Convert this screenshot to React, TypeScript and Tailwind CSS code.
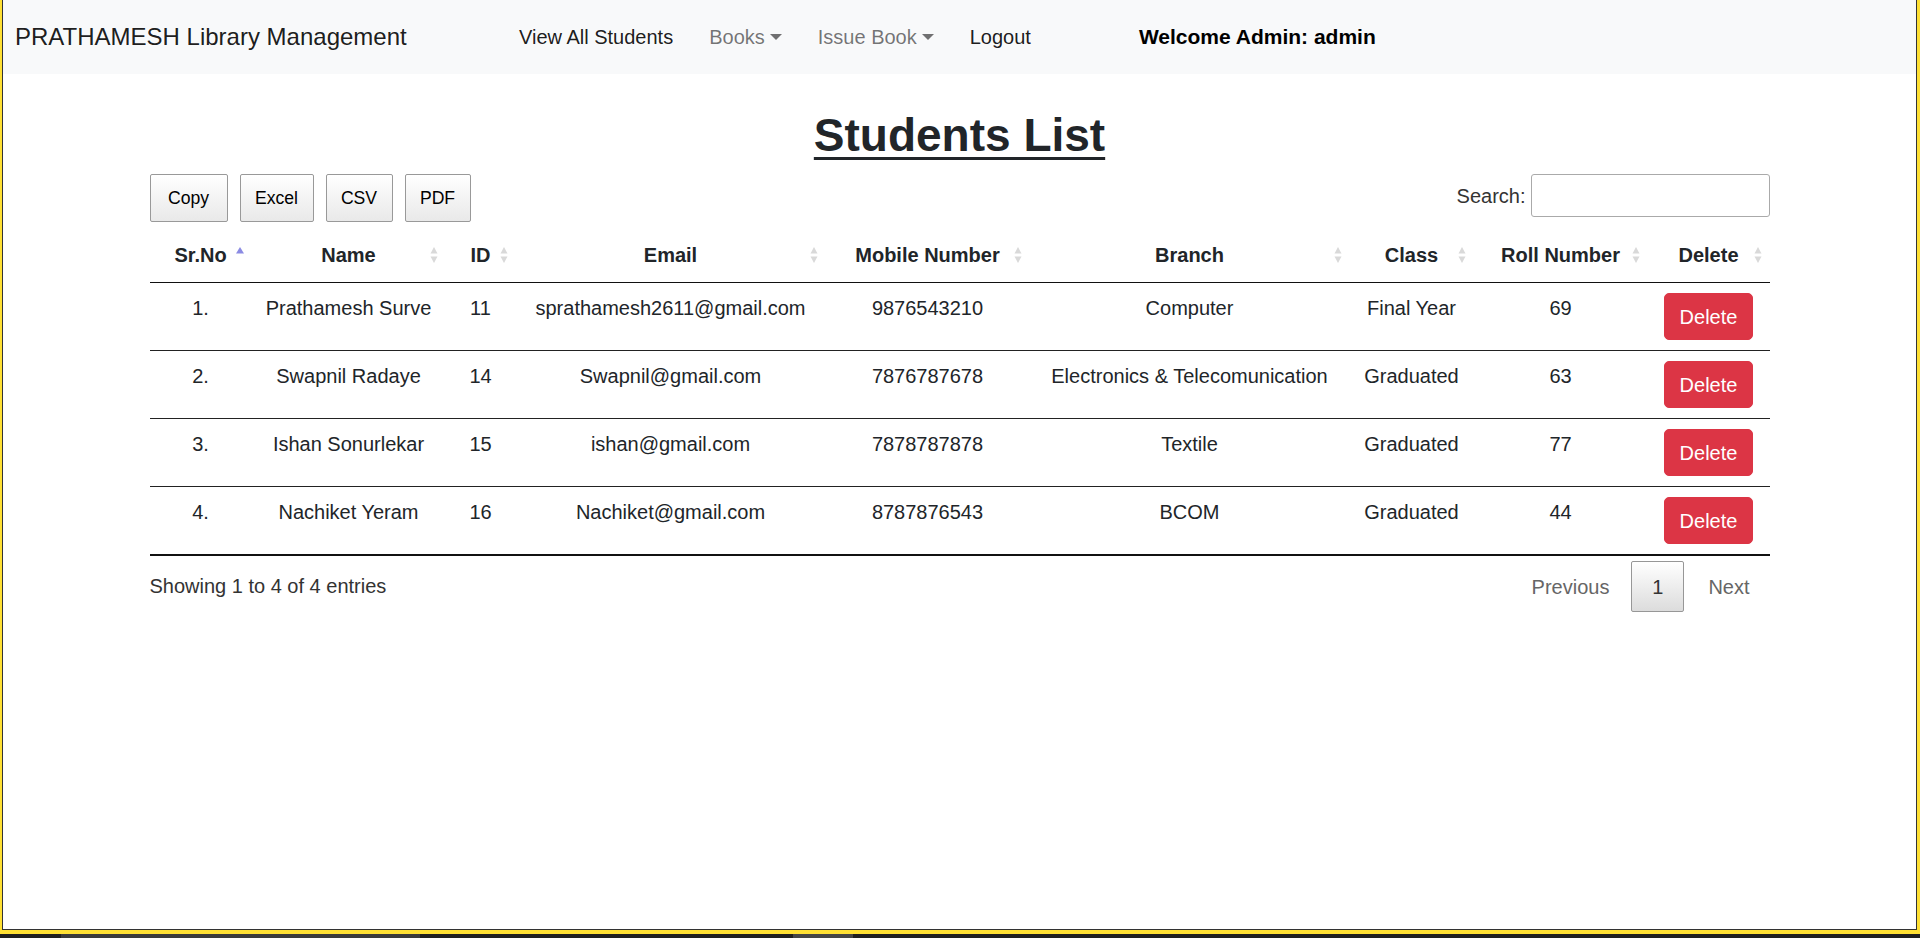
import React from 'react'

interface Student {
  name: string
  id: number
  email: string
  mobile: string
  branch: string
  year: string
  roll: number
}

const students: Student[] = [
  { name: 'Prathamesh Surve', id: 11, email: 'sprathamesh2611@gmail.com', mobile: '9876543210', branch: 'Computer', year: 'Final Year', roll: 69 },
  { name: 'Swapnil Radaye', id: 14, email: 'Swapnil@gmail.com', mobile: '7876787678', branch: 'Electronics & Telecomunication', year: 'Graduated', roll: 63 },
  { name: 'Ishan Sonurlekar', id: 15, email: 'ishan@gmail.com', mobile: '7878787878', branch: 'Textile', year: 'Graduated', roll: 77 },
  { name: 'Nachiket Yeram', id: 16, email: 'Nachiket@gmail.com', mobile: '8787876543', branch: 'BCOM', year: 'Graduated', roll: 44 },
]

const columns = [
  { label: 'Sr.No', width: 'w-[102px]' },
  { label: 'Name', width: 'w-[194px]' },
  { label: 'ID', width: 'w-[70px]' },
  { label: 'Email', width: 'w-[310px]' },
  { label: 'Mobile Number', width: 'w-[204px]' },
  { label: 'Branch', width: 'w-[320px]' },
  { label: 'Class', width: 'w-[124px]' },
  { label: 'Roll Number', width: 'w-[174px]' },
  { label: 'Delete', width: 'w-[122px]' },
]

function SortIcon({ asc }: { asc?: boolean }) {
  return (
    <svg width="24" height="24" viewBox="0 0 24 24">
      {asc ? (
        <polygon points="8,10.5 12,4 16,10.5" fill="#8b8be3" />
      ) : (
        <>
          <polygon points="8.5,10.5 12,4 15.5,10.5" fill="#d9d9d9" />
          <polygon points="8.5,13.5 12,20 15.5,13.5" fill="#d9d9d9" />
        </>
      )}
    </svg>
  )
}

function Caret() {
  return (
    <span className="ml-[5px] inline-block align-[4px] border-t-[6px] border-x-[6px] border-t-current border-x-transparent" />
  )
}

function Navbar() {
  return (
    <nav className="h-[74px] bg-[#f8f9fa] flex items-center pl-[12px]">
      <a className="w-[494px] shrink-0 text-[24px] text-black/90">PRATHAMESH Library Management</a>
      <ul className="flex items-center gap-[16px] text-[20px]">
        <li><a className="px-[10px] text-black/90">View All Students</a></li>
        <li><a className="px-[10px] text-black/55">Books<Caret /></a></li>
        <li><a className="px-[10px] text-black/55">Issue Book<Caret /></a></li>
        <li><a className="px-[10px] text-black/90">Logout</a></li>
      </ul>
      <span className="ml-[98px] text-[21px] font-semibold text-black">Welcome Admin: admin</span>
    </nav>
  )
}

function ExportButton({ label, width }: { label: string; width: string }) {
  return (
    <button className={`${width} h-[48px] text-[17.6px] text-black border border-[#999] rounded-[2px] bg-gradient-to-b from-white to-[#e9e9e9]`}>
      {label}
    </button>
  )
}

export default function App() {
  return (
    <div className="w-[1920px] h-[938px] overflow-hidden bg-[#ffe033] flex flex-col font-[Liberation_Sans,Arial,sans-serif] text-[#212529]">
      <div className="h-[930px] ml-[2px] mr-[3px] bg-white border-x border-b border-[#333]">
        <Navbar />

        <div className="w-[1620px] mx-auto">
          <h1 className="pt-[31px] h-[91px] text-center text-[46px] leading-[60px] font-bold underline decoration-[3px] underline-offset-[6px]">
            Students List
          </h1>

          <div className="mt-[9px] h-[48px] flex items-start justify-between">
            <div className="flex gap-[12px]">
              <ExportButton label="Copy" width="w-[78px]" />
              <ExportButton label="Excel" width="w-[74px]" />
              <ExportButton label="CSV" width="w-[67px]" />
              <ExportButton label="PDF" width="w-[66px]" />
            </div>
            <label className="flex items-center gap-[5px] text-[20px] text-[#333]">
              Search:
              <input className="w-[239px] h-[43px] border border-[#aaa] rounded-[3px] bg-white" />
            </label>
          </div>

          <table className="mt-[5px] w-[1620px] table-fixed border-collapse text-center text-[20px] leading-[30px]">
            <colgroup>
              {columns.map((c) => (
                <col key={c.label} className={c.width} />
              ))}
            </colgroup>
            <thead>
              <tr className="border-b border-[#111]">
                {columns.map((c, i) => (
                  <th key={c.label} className="relative px-[22px] py-[12.5px] font-bold whitespace-nowrap">
                    {c.label}
                    <span className="absolute right-0 top-1/2 -translate-y-1/2 flex">
                      <SortIcon asc={i === 0} />
                    </span>
                  </th>
                ))}
              </tr>
            </thead>
            <tbody>
              {students.map((s, i) => (
                <tr key={s.id} className={i === students.length - 1 ? 'border-b-2 border-[#111]' : 'border-b border-[#222]'}>
                  <td className="align-top px-[12px] py-[10px]">{i + 1}.</td>
                  <td className="align-top px-[12px] py-[10px]">{s.name}</td>
                  <td className="align-top px-[12px] py-[10px]">{s.id}</td>
                  <td className="align-top px-[12px] py-[10px] whitespace-nowrap">{s.email}</td>
                  <td className="align-top px-[12px] py-[10px]">{s.mobile}</td>
                  <td className="align-top px-[12px] py-[10px] whitespace-nowrap">{s.branch}</td>
                  <td className="align-top px-[12px] py-[10px]">{s.year}</td>
                  <td className="align-top px-[12px] py-[10px]">{s.roll}</td>
                  <td className="align-top px-[12px] py-[10px]">
                    <button className="px-[15px] py-[7.5px] text-[20px] leading-[30px] text-white bg-[#dc3545] border border-[#dc3545] rounded-[5px]">
                      Delete
                    </button>
                  </td>
                </tr>
              ))}
            </tbody>
          </table>

          <div className="flex items-start justify-between">
            <div className="pt-[15px] text-[20px] leading-[30px] text-[#333]">Showing 1 to 4 of 4 entries</div>
            <div className="pt-[5px] flex items-center text-[20px] leading-[30px]">
              <span className="px-[22px] text-[#666]">Previous</span>
              <span className="w-[53px] h-[51px] flex items-center justify-center text-[#333] border border-[#979797] rounded-[2px] bg-gradient-to-b from-white to-[#dcdcdc]">
                1
              </span>
              <span className="pl-[24px] pr-[20px] text-[#666]">Next</span>
            </div>
          </div>
        </div>
      </div>
      <div className="mt-[4px] h-[4px] bg-[#1f1f1f] flex">
        <div className="ml-[61px] w-[359px] bg-[#3a3a3a]" />
        <div className="ml-[373px] w-[60px] bg-[#454545]" />
      </div>
    </div>
  )
}
